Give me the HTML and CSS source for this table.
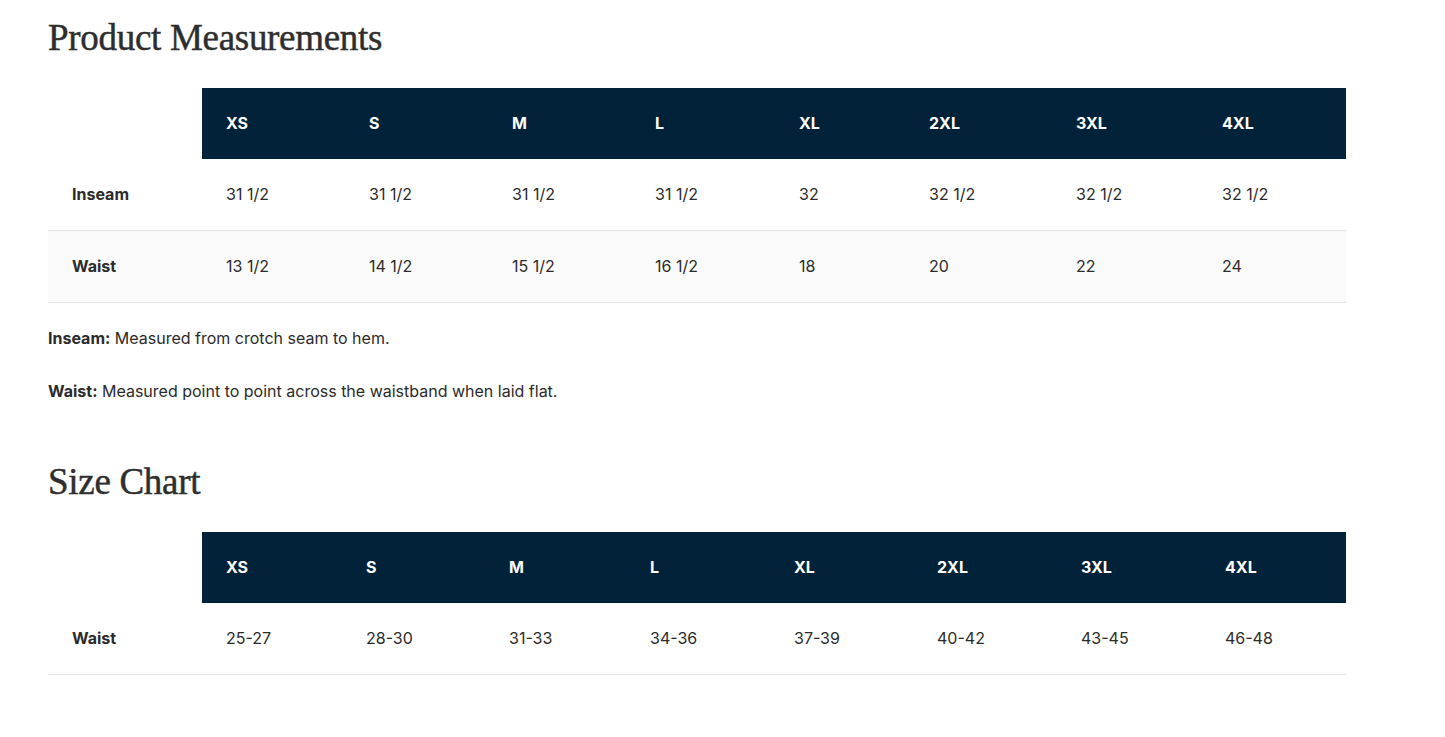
FILE: index.html
```html
<!DOCTYPE html>
<html lang="en">
<head>
<meta charset="utf-8">
<title>Product Measurements</title>
<link rel="stylesheet" href="styles.css">
</head>
<body>
<main class="page">
  <section class="block">
    <h2 class="title">Product Measurements</h2>
    <table class="chart chart-measure">
      <colgroup>
        <col class="c0"><col class="c1"><col class="c2"><col class="c3"><col class="c4"><col class="c5"><col class="c6"><col class="c7"><col class="c8">
      </colgroup>
      <thead>
        <tr>
          <th class="blank"></th>
          <th>XS</th><th>S</th><th>M</th><th>L</th><th>XL</th><th>2XL</th><th>3XL</th><th>4XL</th>
        </tr>
      </thead>
      <tbody>
        <tr>
          <td class="label">Inseam</td>
          <td>31 1/2</td><td>31 1/2</td><td>31 1/2</td><td>31 1/2</td><td>32</td><td>32 1/2</td><td>32 1/2</td><td>32 1/2</td>
        </tr>
        <tr class="alt">
          <td class="label">Waist</td>
          <td>13 1/2</td><td>14 1/2</td><td>15 1/2</td><td>16 1/2</td><td>18</td><td>20</td><td>22</td><td>24</td>
        </tr>
      </tbody>
    </table>
    <p class="note first"><strong>Inseam:</strong> Measured from crotch seam to hem.</p>
    <p class="note"><strong>Waist:</strong> Measured point to point across the waistband when laid flat.</p>
  </section>
  <section class="block second">
    <h2 class="title">Size Chart</h2>
    <table class="chart chart-size">
      <colgroup>
        <col class="c0"><col class="c1"><col class="c2"><col class="c3"><col class="c4"><col class="c5"><col class="c6"><col class="c7"><col class="c8">
      </colgroup>
      <thead>
        <tr>
          <th class="blank"></th>
          <th>XS</th><th>S</th><th>M</th><th>L</th><th>XL</th><th>2XL</th><th>3XL</th><th>4XL</th>
        </tr>
      </thead>
      <tbody>
        <tr>
          <td class="label">Waist</td>
          <td>25-27</td><td>28-30</td><td>31-33</td><td>34-36</td><td>37-39</td><td>40-42</td><td>43-45</td><td>46-48</td>
        </tr>
      </tbody>
    </table>
  </section>
</main>
</body>
</html>
```

FILE: styles.css
```css
* { box-sizing: border-box; }

body {
  margin: 0;
  background: #ffffff;
  color: #2b2b2b;
  font-family: Inter, "Liberation Sans", Arial, sans-serif;
  font-size: 16px;
}

.page {
  width: 1298px;
  margin-left: 48px;
}

.title {
  font-family: "Liberation Serif", "DejaVu Serif", serif;
  font-weight: 400;
  font-size: 37px;
  line-height: 40px;
  color: #2e2e2e;
  margin: 18px 0 30px;
  letter-spacing: -0.3px;
  -webkit-text-stroke: 0.45px #2e2e2e;
}

.second .title {
  margin-top: 58px;
}

.chart {
  width: 100%;
  border-collapse: collapse;
  table-layout: fixed;
}

.chart .c0 { width: 154px; }

.chart-measure .c1 { width: 143px; }
.chart-measure .c2 { width: 143px; }
.chart-measure .c3 { width: 143px; }
.chart-measure .c4 { width: 144px; }
.chart-measure .c5 { width: 130px; }
.chart-measure .c6 { width: 147px; }
.chart-measure .c7 { width: 146px; }
.chart-measure .c8 { width: 148px; }

.chart-size .c1 { width: 140px; }
.chart-size .c2 { width: 143px; }
.chart-size .c3 { width: 141px; }
.chart-size .c4 { width: 144px; }
.chart-size .c5 { width: 143px; }
.chart-size .c6 { width: 144px; }
.chart-size .c7 { width: 144px; }
.chart-size .c8 { width: 145px; }

.chart th,
.chart td {
  text-align: left;
  padding: 24px 24px;
  line-height: 23px;
  font-size: 16px;
}

.chart th {
  background: #012238;
  color: #ffffff;
  font-weight: 700;
}

.chart th.blank {
  background: #ffffff;
}

.chart td {
  border-bottom: 1px solid #e4e4e4;
  color: #2b2b2b;
}

.chart td.label {
  font-weight: 700;
}

.chart tr.alt td {
  background: #fafafa;
}

.note {
  margin: 0;
  line-height: 26px;
  color: #2b2b2b;
}

.note.first {
  margin-top: 22px;
}

.note + .note {
  margin-top: 27px;
}

.note strong {
  font-weight: 700;
}
```
